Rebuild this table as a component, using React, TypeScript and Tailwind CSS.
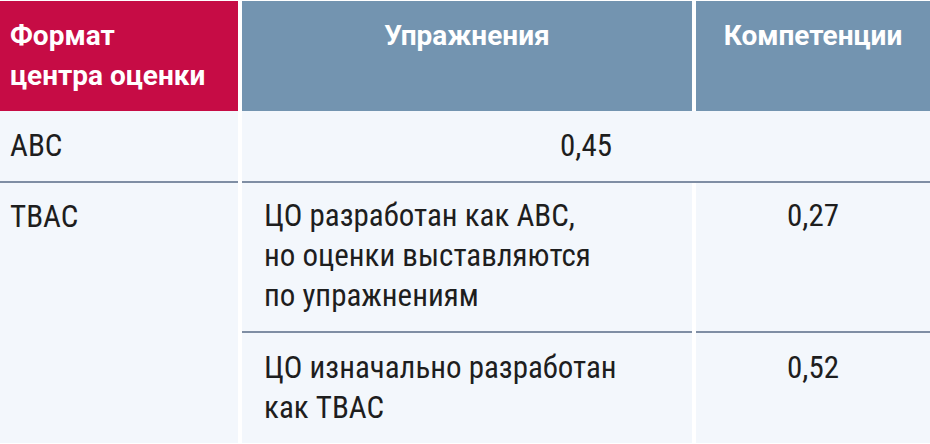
export default function App() {
  return (
    <div className="w-[930px] h-[444px] bg-white py-px">
      <div className="grid grid-cols-[238px_450px_234px] gap-x-1 text-[#1e1e1e] font-['Roboto_Condensed','Roboto',sans-serif] text-[31px] leading-[40px]">
        {/* Header */}
        <div className="bg-[#c60c45] text-white font-['Roboto',sans-serif] font-bold text-[28px] pl-[10px] pt-[15px] pb-[15px]">
          Формат
          <br />
          центра оценки
        </div>
        <div className="bg-[#7394b0] text-white font-['Roboto',sans-serif] font-bold text-[28px] text-center pt-[15px] pb-[15px]">
          Упражнения
        </div>
        <div className="bg-[#7394b0] text-white font-['Roboto',sans-serif] font-bold text-[28px] text-center pt-[15px] pb-[15px]">
          Компетенции
        </div>

        {/* ABC */}
        <div className="bg-[#f3f7fc] pl-[10px] pt-[15px] pb-[15px] border-b-2 border-[#7f8ea4]">
          ABC
        </div>
        <div className="col-span-2 bg-[#f3f7fc] text-center pt-[15px] pb-[15px] border-b-2 border-[#7f8ea4]">
          0,45
        </div>

        {/* TBAC */}
        <div className="row-span-2 bg-[#f3f7fc] pl-[10px] pt-[14px]">
          TBAC
        </div>
        <div className="bg-[#f3f7fc] pl-[22px] pt-[13px] pb-[15px] border-b-2 border-[#7f8ea4]">
          ЦО разработан как ABC,
          <br />
          но оценки выставляются
          <br />
          по упражнениям
        </div>
        <div className="bg-[#f3f7fc] text-center pt-[13px] border-b-2 border-[#7f8ea4]">
          0,27
        </div>
        <div className="bg-[#f3f7fc] pl-[22px] pt-[15px] pb-[15px]">
          ЦО изначально разработан
          <br />
          как TBAC
        </div>
        <div className="bg-[#f3f7fc] text-center pt-[15px]">
          0,52
        </div>
      </div>
    </div>
  );
}
